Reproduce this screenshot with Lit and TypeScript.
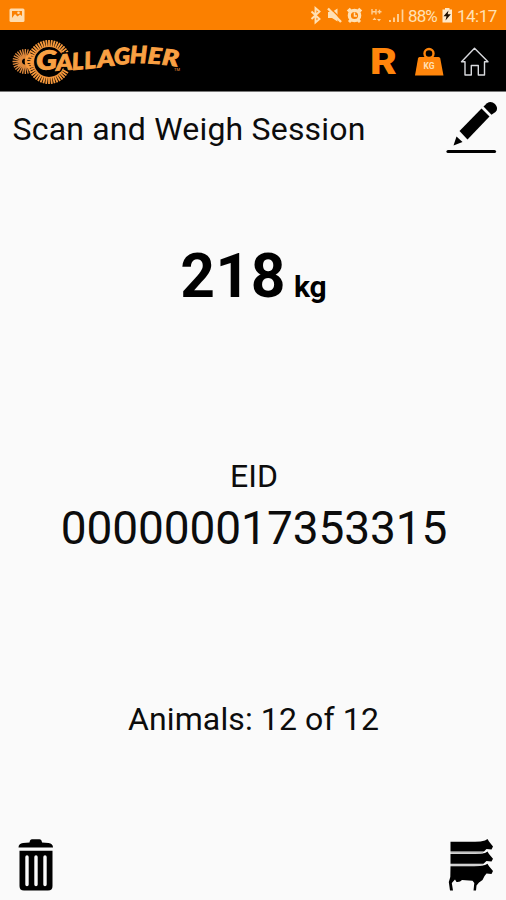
import { LitElement, html, svg, css } from "lit";
import { customElement } from "lit/decorators.js";

// Radial strokes between two radii around a centre.
const rays = (cx: number, cy: number, r1: number, r2: number, from: number, to: number, n: number) => {
  let d = "";
  for (let i = 0; i <= n; i++) {
    const a = ((from + ((to - from) * i) / n) * Math.PI) / 180;
    d += `M${(cx + r1 * Math.cos(a)).toFixed(2)} ${(cy + r1 * Math.sin(a)).toFixed(2)}L${(cx + r2 * Math.cos(a)).toFixed(2)} ${(cy + r2 * Math.sin(a)).toFixed(2)}`;
  }
  return d;
};

const letters: [string, number, number, number, number, number][] = [
  // glyph, x, baseline, size, rotation, width
  ["G", 36.5, 70, 26, -3, 21],
  ["A", 56.5, 70.8, 22, -4, 16.5],
  ["L", 72.5, 70, 23, -5, 11.5],
  ["L", 85, 69, 23, -6, 11.5],
  ["A", 98, 67.5, 22.5, -7, 17.5],
  ["G", 114.500, 64.8, 22.500, -4, 16],
  ["H", 130, 63.200, 22, 0, 17],
  ["E", 147.500, 63.300, 22, 4, 13.500],
  ["R", 161.500, 64.500, 22, 7, 16.500],
];

@customElement("status-bar")
export class StatusBar extends LitElement {
  static styles = css`
    :host { display: flex; height: 30px; align-items: center; background: #fb8000; color: #ffe0b4; }
    .icons { flex: none; display: block; }
    .gap { flex: 1; }
    .text { font: 17px/30px Roboto, sans-serif; white-space: nowrap; padding-top: 2px; }
    .pct { width: 30px; letter-spacing: -0.9px; }
    .time { width: 49px; letter-spacing: -0.5px; }
  `;
  render() {
    return html`
      <svg class="icons" width="34" height="30" viewBox="0 0 34 30">
        <rect x="9.5" y="8.5" width="15" height="13.5" rx="1.5" fill="#ffdcae" />
        <path d="M12 11H22V16L20 14.500L17.5 16.500L15 14L12 18Z" fill="#fb8000" />
        <circle cx="18.5" cy="12.8" r="1.3" fill="#ffdcae" />
      </svg>
      <span class="gap"></span>
      <svg class="icons" width="100" height="30" viewBox="308 0 100 30">
        <path d="M311.5 11.5L319.5 19L315.5 22.5V8L319.5 11.5L311.5 19" fill="none" stroke="#ffe0b4" stroke-width="1.9" />
        <path d="M328 12H332L337.500 8.5V21.5L332 18H328Z" fill="#ffe0b4" />
        <path d="M329.500 7.500L342.500 20.500" stroke="#fb8000" stroke-width="1.400" />
        <path d="M328 8.500L341 22" stroke="#ffe0b4" stroke-width="2.400" />
        <circle cx="354.500" cy="15.500" r="5.200" fill="none" stroke="#ffe0b4" stroke-width="3.200" />
        <path d="M347.800 11.500L350.800 8.800M361.200 11.500L358.200 8.800M349 22L351 20M360 22L358 20" stroke="#ffe0b4" stroke-width="3" />
        <path d="M354.500 12.500V16H357" stroke="#ffe0b4" stroke-width="1.500" fill="none" />
        <path d="M372 9V14.500M376 9V14.500M372 11.700H376M377.500 11.700H381.500M379.500 9.800V13.700" stroke="#ffd095" stroke-width="1.400" />
        <path d="M372.500 20L374.500 17.500L376.500 20ZM377 19L379 21.500L381 19Z" fill="#ffd095" />
        <path d="M390 22V20M394 22V17.500M398 22V14" stroke="#ffd59f" stroke-width="1.800" />
        <path d="M402.500 22V9.500" stroke="#ffd59f" stroke-width="1.700" />
      </svg>
      <span class="text pct">88%</span>
      <svg class="icons" width="19" height="30" viewBox="438 0 19 30">
        <path d="M442.500 9.500H445V8H449.500V9.500H452V22.500H442.500Z" fill="#ffe9c9" />
        <path d="M448.500 10.500L443.500 16.300H446.500L445.500 20.500L450.800 14.300H447.700Z" fill="#201000" />
      </svg>
      <span class="text time">14:17</span>
    `;
  }
}

@customElement("brand-bar")
export class BrandBar extends LitElement {
  static styles = css`
    :host { display: flex; height: 61px; justify-content: space-between; background: #000; border-bottom: 1px solid #777; }
    svg { display: block; }
    .word { font-family: Lato, sans-serif; font-weight: 900; font-style: italic; fill: #f9a043; }
    .under { stroke: #000; stroke-width: 3.6px; }
    .over { stroke: #f9a043; stroke-width: 0.9px; }
    .tm { font: 4px Roboto, sans-serif; fill: #f99a3c; }
    .r { font: 900 37px Roboto, sans-serif; fill: #ff850b; }
    .kg { font: bold 8.500px Roboto, sans-serif; fill: #ffe0b8; }
  `;
  word(layer: string) {
    return letters.map(
      ([c, x, y, s, r, w]) => svg`<text class=${`word ${layer}`} x=${x} y=${y} font-size=${s} textLength=${w}
        lengthAdjust="spacingAndGlyphs" transform=${`rotate(${r} ${x} ${y})`}>${c}</text>`
    );
  }
  render() {
    return html`
      <svg width="190" height="61" viewBox="0 30 190 61">
        <path d=${rays(25, 61.5, 3, 12.5, 62, 298, 18)} stroke="#dd883c" stroke-width="1.400" />
        <circle cx="49" cy="62" r="15.500" fill="none" stroke="#e58a38" stroke-width="1.200" />
        <path d=${rays(49, 62, 15.5, 22, 30, 330, 40)} stroke="#f99a3c" stroke-width="1.800" />
        <path d="M31 55Q26 56 26 61T30 68M33.500 58Q30 61 32.500 66" fill="none" stroke="#f99a3c" stroke-width="2.600" />
        ${this.word("under")}
        ${this.word("over")}
        <text class="tm" x="174" y="71">TM</text>
      </svg>
      <svg width="146" height="61" viewBox="360 30 146 61">
        <text class="r" x="370" y="74" textLength="27" lengthAdjust="spacingAndGlyphs">R</text>
        <circle cx="429" cy="53.500" r="4.500" fill="none" stroke="#ff850b" stroke-width="2.400" />
        <path d="M419.500 57H438.500Q440 57 440.300 58.500L443.500 75.500H415L418 58.500Q418.300 57 419.500 57Z" fill="#ff850b" />
        <text class="kg" x="423.500" y="69" textLength="11" lengthAdjust="spacingAndGlyphs">KG</text>
        <path d="M474.500 48.300L488 61.800H484.500V75H478.300V65.500H471.300V75H465V61.800H461.500Z" fill="none" stroke="#d9dade" stroke-width="1.400" stroke-linejoin="round" />
      </svg>
    `;
  }
}

@customElement("app-root")
export class AppRoot extends LitElement {
  static styles = css`
    :host { display: flex; flex-direction: column; height: 900px; background: #fafafa; color: #0c0c0c; font-family: Roboto, sans-serif; }
    svg { display: block; flex: none; }
    .head { display: flex; justify-content: space-between; height: 70px; }
    .title { font-size: 32px; line-height: 38px; padding: 18px 0 0 12.5px; letter-spacing: 0.2px; white-space: nowrap; }
    .weight { display: flex; justify-content: center; align-items: baseline; margin-top: 79px; padding-left: 1px; height: 72px; line-height: 72px; font-weight: 700; color: #000; }
    .value { font-size: 60.5px; letter-spacing: 0.5px; }
    .unit { font-size: 30px; margin-left: 8px; }
    .eid { text-align: center; margin-top: 144px; padding-left: 2px; }
    .label { font-size: 32px; line-height: 38px; }
    .number { font-size: 46px; line-height: 54px; margin-top: 6px; letter-spacing: -0.07px; }
    .count { text-align: center; font-size: 32px; line-height: 38px; margin-top: 145px; padding-left: 1px; letter-spacing: 0.12px; }
    .foot { display: flex; justify-content: space-between; margin-top: auto; height: 75px; }
  `;
  render() {
    return html`
      <status-bar></status-bar>
      <brand-bar></brand-bar>
      <div class="head">
        <div class="title">Scan and Weigh Session</div>
        <svg width="76" height="70" viewBox="0 0 76 70">
          <path d="M29.500 39L51.500 16.500L59.500 24.500L37.500 47.500Z" />
          <path d="M53.500 14.500L57 11.200Q61 8.500 65 12Q69 16.500 65.500 20L61.500 22.800Z" />
          <path d="M26.500 44.500L32.500 50L23.500 53.500Z" />
          <path d="M18 59.500H64.500" stroke="#000" stroke-width="3.200" stroke-linecap="round" />
        </svg>
      </div>
      <div class="weight"><span class="value">218</span><span class="unit">kg</span></div>
      <div class="eid">
        <div class="label">EID</div>
        <div class="number">000000017353315</div>
      </div>
      <div class="count">Animals: 12 of 12</div>
      <div class="foot">
        <svg width="80" height="75" viewBox="0 0 80 75">
          <path d="M18.500 22.500Q18.500 18.500 23 18L29.500 17.500Q30 14.200 32 14.200H39.500Q41.500 14.200 42 17.500L48.500 18Q53 18.500 53 22.500Z" />
          <path d="M19.500 25.800H52.500V61Q52.500 65.500 48 65.500H24Q19.500 65.500 19.500 61Z" />
          <path d="M27 32V59.500M36 32V59.500M45 32V59.500" stroke="#fafafa" stroke-width="3.400" stroke-linecap="round" />
        </svg>
        <svg width="76" height="75" viewBox="0 0 76 75">
          <path d="M20.500 16.800H45Q51 16.800 55 15.500L57.500 14L59 16.500L63 21.500L61.500 24.500L56.500 24L54 26.500H20.500Z" />
          <path d="M20.500 29H45Q51 29 55 28L57.500 26.500L59 29L63 33.800L61.500 36.500L56.500 36L53.500 38.800H20.500Z" />
          <path d="M20.500 41.300H44Q51 41.300 55 40L57.500 38.700L59 41.300L63 46L61.500 49L56.500 48.500Q54 51 52.500 55L49 57.500L46.500 60.500L46 65.500H43.500L44.300 58L42.500 55.800L32 55Q30 57.500 26.500 57L25 54.500L21.800 58L23 65.500H20L18.800 57L20.300 52Z" />
          <path d="M20.500 27.800H53M20.500 40H53" stroke="#aaa" stroke-width="1.200" />
        </svg>
      </div>
    `;
  }
}
